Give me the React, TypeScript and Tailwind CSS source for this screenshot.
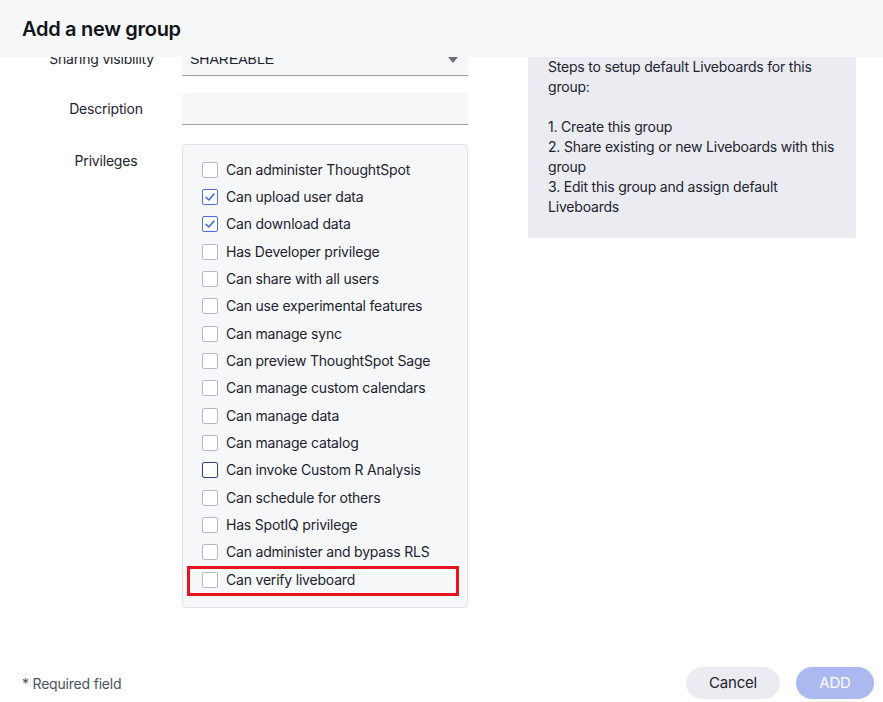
import React from "react";

const items: { label: string; checked?: boolean; focus?: boolean; highlight?: boolean }[] = [
  { label: "Can administer ThoughtSpot" },
  { label: "Can upload user data", checked: true },
  { label: "Can download data", checked: true },
  { label: "Has Developer privilege" },
  { label: "Can share with all users" },
  { label: "Can use experimental features" },
  { label: "Can manage sync" },
  { label: "Can preview ThoughtSpot Sage" },
  { label: "Can manage custom calendars" },
  { label: "Can manage data" },
  { label: "Can manage catalog" },
  { label: "Can invoke Custom R Analysis", focus: true },
  { label: "Can schedule for others" },
  { label: "Has SpotIQ privilege" },
  { label: "Can administer and bypass RLS" },
  { label: "Can verify liveboard", highlight: true },
];

function Box({ checked, focus }: { checked?: boolean; focus?: boolean }) {
  return (
    <span
      className={
        "w-[16px] h-[16px] rounded-[2px] bg-white border flex items-center justify-center shrink-0 " +
        (checked ? "border-[#4f6fe0]" : focus ? "border-[#2f3f7e]" : "border-[#b5bac3]")
      }
    >
      {checked && (
        <svg width="12" height="12" viewBox="0 0 12 12" fill="none">
          <path d="M2 6.2 L4.8 9 L10 3" stroke="#3d63e0" strokeWidth="1.5" strokeLinecap="round" strokeLinejoin="round" />
        </svg>
      )}
    </span>
  );
}

export default function App() {
  return (
    <div
      className="w-[883px] h-[702px] flex flex-col bg-white overflow-hidden text-[#1d232f] tracking-[-0.2px]"
      style={{ fontFamily: "Inter, 'Noto Sans', sans-serif" }}
    >
      <div className="h-[57px] shrink-0 bg-[#f6f7f9] px-[22px] flex items-center relative z-10">
        <h1 className="text-[20px] font-semibold tracking-[-0.3px] text-[#111418]">Add a new group</h1>
      </div>
      <div className="flex-1 overflow-hidden">
        <div className="mt-[-13px] flex">
          <div className="pl-[30px] flex flex-col">
            <div className="flex h-[32px]">
              <div className="w-[152px] flex items-center justify-center text-[14px] pb-[3px]">
                Sharing visibility<span className="text-[#9aa0aa] ml-[4px] text-[10px] self-start mt-[6px]">*</span>
              </div>
              <div className="w-[286px] bg-[#f6f7f9] border-b border-[#9aa0aa] flex items-center justify-between pl-[8px] pr-[10px]">
                <span className="text-[14px] tracking-normal" style={{ fontFamily: "'Liberation Sans', Arial, sans-serif" }}>
                  SHAREABLE
                </span>
                <svg width="10" height="6" viewBox="0 0 10 6">
                  <path d="M0 0 L10 0 L5 6 Z" fill="#6b707a" />
                </svg>
              </div>
            </div>
            <div className="flex h-[32px] mt-[17px]">
              <div className="w-[152px] flex items-center justify-center text-[14px] pb-[1px]">Description</div>
              <div className="w-[286px] bg-[#f6f7f9] border-b border-[#9aa0aa]" />
            </div>
            <div className="flex mt-[19px]">
              <div className="w-[152px] flex justify-center text-[14px] pt-[7px] leading-[20px]">Privileges</div>
              <div className="w-[286px] bg-[#f6f7f9] border border-[#dfe2e8] rounded-[4px] pt-[11px] pb-[14px] px-[19px]">
                {items.map((it) => (
                  <div key={it.label} className="relative h-[27.33px] flex items-center gap-[8px]">
                    <Box checked={it.checked} focus={it.focus} />
                    <span className="text-[14px] leading-[20px] text-[#1d232f]">{it.label}</span>
                    {it.highlight && (
                      <div className="absolute left-[-15px] right-[-11px] top-[0px] bottom-[-3px] border-[3px] border-[#e5141f]" />
                    )}
                  </div>
                ))}
              </div>
            </div>
          </div>
          <div className="ml-[60px] w-[328px] h-[194px] bg-[#ebecf1] pt-[13px] pl-[20px] pr-[14px] text-[14px] leading-[20px] text-[#1d232f]">
            <p>Steps to setup default Liveboards for this group:</p>
            <p className="mt-[20px]">1. Create this group</p>
            <p>2. Share existing or new Liveboards with this group</p>
            <p>3. Edit this group and assign default Liveboards</p>
          </div>
        </div>
      </div>
      <div className="h-[38px] shrink-0 flex items-center justify-between pl-[22px] pr-[9px]">
        <span className="text-[14px] text-[#4a5160]">* Required field</span>
        <div className="flex gap-[16px]">
          <button className="w-[94px] h-[32px] rounded-full bg-[#ebecf1] text-[15px] text-[#1d232f]">Cancel</button>
          <button className="w-[78px] h-[32px] rounded-full bg-[#abb9f0] text-[15px] text-white">ADD</button>
        </div>
      </div>
    </div>
  );
}
